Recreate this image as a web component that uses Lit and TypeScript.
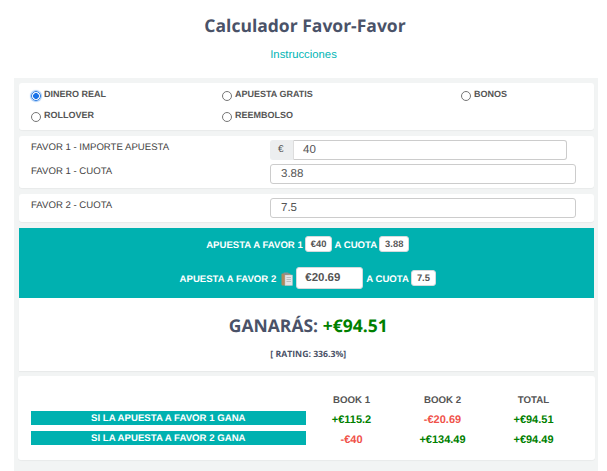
import { LitElement, html, css } from "lit";
import { customElement } from "lit/decorators.js";

const radio = (label: string, checked = false) => html`<label class="radio"><span class="dot ${checked ? "on" : ""}"></span><b>${label}</b></label>`;
const clip = html`<svg class="clip" width="12" height="14" viewBox="0 0 12 14">
  <rect x="0.5" y="1.5" width="9" height="12" rx="1" fill="#b08a5e"/>
  <rect x="4" y="3" width="7.5" height="10.5" fill="#e4e6e8" stroke="#b9bdc0" stroke-width=".5"/>
  <rect x="2.5" y="0.5" width="5" height="2.2" rx=".6" fill="#8a8f93"/>
  <path d="M5.5 5.5h4.5M5.5 7.5h4.5M5.5 9.5h4.5" stroke="#a9adb0" stroke-width=".7"/>
</svg>`;

@customElement("app-root")
export class AppRoot extends LitElement {
  static styles = css`
    :host { display: block; width: 607px; height: 471px; overflow: hidden; background: #fff; font-family: "Liberation Sans", Arial, sans-serif; text-rendering: geometricPrecision; }
    h1 { margin: 0; padding: 14px 0 0 3px; height: 24px; text-align: center; font: 700 17.5px/24px "Open Sans", sans-serif; color: #4a5268; }
    .link { margin-top: 10px; height: 14px; line-height: 14px; text-align: center; font-size: 11.3px; color: #00b5b5; }
    .panel { margin: 16px 9px 0 14px; padding: 5px 4.5px 0 5px; height: 388px; background: #f2f4f4; display: flex; flex-direction: column; }
    .card { background: #fff; border-radius: 3px; box-shadow: 0 1px 1px rgba(0,0,0,.04); }
    .radios { height: 47px; margin-bottom: 6px; padding: 5px 0 0 12px; box-sizing: border-box; display: grid; grid-template-columns: 191px 239px 1fr; grid-auto-rows: 21px; }
    .radio { display: flex; align-items: flex-start; font-size: 9px; color: #555; line-height: 12px; }
    .dot { width: 8px; height: 8px; margin: 3px 3px 0 0; border: 1px solid #767676; border-radius: 50%; background: #fff; flex: none; }
    .dot.on { border-color: #2f7de1; background: radial-gradient(circle, #1a73e8 0 2.6px, #fff 3.2px); box-shadow: 0 0 1px 1px #a6cbf7; }
    .inputs { height: 52px; margin-bottom: 6px; padding: 4px 0 0 12px; box-sizing: border-box; display: flex; flex-direction: column; gap: 4px; }
    .single { height: 28px; margin-bottom: 6px; padding: 4px 0 0 12px; box-sizing: border-box; }
    .row { display: flex; height: 20px; }
    .lab { width: 239px; flex: none; font-size: 9.6px; color: #444; line-height: 15px; }
    .field { width: 306px; height: 20px; box-sizing: border-box; border: 1px solid #ccc; border-radius: 3px; padding: 0 10px; font-size: 11.5px; line-height: 19px; color: #555; background: #fff; }
    .addon { width: 23px; height: 20px; box-sizing: border-box; background: #eceeef; border-radius: 3px 0 0 3px; font-size: 10px; line-height: 20px; padding-left: 8px; color: #555; }
    .field.short { width: 274px; border-radius: 0 3px 3px 0; border-left-color: #ddd; padding-left: 9px; }
    .teal { height: 70px; background: #00b1b0; color: #fff; font-size: 9.6px; font-weight: 700; display: flex; flex-direction: column; align-items: center; }
    .tl { display: flex; align-items: center; justify-content: center; gap: 2px; height: 34px; padding-left: 3px; }
    .pill { background: #fff; color: #555; border: 1px solid #d5dadd; border-radius: 3px; padding: 0 5px; height: 14px; line-height: 14px; font-size: 9.4px; font-weight: 700; margin-bottom: 2px; }
    .big { width: 67px; height: 22px; box-sizing: border-box; background: #fff; color: #555; border: 1px solid #d5dadd; border-radius: 3px; font-size: 11.5px; font-weight: 700; line-height: 20px; padding-left: 8px; margin: 0 1px 2px 0; }
    .clip { margin: 0 1px 0 3px; }
    .result { height: 73px; padding-left: 4px; background: #fff; text-align: center; box-shadow: 0 1px 1px rgba(0,0,0,.04); margin-bottom: 5px; }
    .win { padding-top: 16px; height: 24px; font: 700 17.5px/24px "Open Sans", sans-serif; color: #4a5268; }
    .win span { color: #008000; }
    .rating { margin-top: 10px; font: 700 8.7px/12px "Open Sans", sans-serif; color: #4a5268; }
    .table { margin: 0 -1px; height: 84px; padding: 18px 0 0 13px; box-sizing: border-box; display: grid; grid-template-columns: 275px 91px 91px 91px; grid-template-rows: 14px 20px 20px; align-items: center; text-align: center; font-size: 11px; font-weight: 700; }
    .h { color: #555; font-size: 9.7px; height: 14px; line-height: 14px; align-self: start; }
    .bar { background: #00b1b0; color: #fff; height: 14px; line-height: 15px; font-size: 9.65px; text-align: left; padding-left: 60px; box-sizing: border-box; }
    .g, .r { padding-top: 3px; }
    .g { color: #008000; }
    .r { color: #f0524a; }
  `;
  render() {
    return html`
      <h1>Calculador Favor-Favor</h1>
      <div class="link">Instrucciones</div>
      <div class="panel">
        <div class="card radios">
          ${radio("DINERO REAL", true)}${radio("APUESTA GRATIS")}${radio("BONOS")}
          ${radio("ROLLOVER")}${radio("REEMBOLSO")}
        </div>
        <div class="card inputs">
          <div class="row"><div class="lab">FAVOR 1 - IMPORTE APUESTA</div><div class="addon">€</div><div class="field short">40</div></div>
          <div class="row"><div class="lab">FAVOR 1 - CUOTA</div><div class="field">3.88</div></div>
        </div>
        <div class="card single">
          <div class="row"><div class="lab">FAVOR 2 - CUOTA</div><div class="field">7.5</div></div>
        </div>
        <div class="teal">
          <div class="tl">APUESTA A FAVOR 1 <span class="pill">€40</span> A CUOTA <span class="pill">3.88</span></div>
          <div class="tl">APUESTA A FAVOR 2 ${clip}<span class="big">€20.69</span> A CUOTA <span class="pill">7.5</span></div>
        </div>
        <div class="result">
          <div class="win">GANARÁS: <span>+€94.51</span></div>
          <div class="rating">[ RATING: 336.3%]</div>
        </div>
        <div class="card table">
          <div class="h"></div><div class="h">BOOK 1</div><div class="h">BOOK 2</div><div class="h">TOTAL</div>
          <div class="bar">SI LA APUESTA A FAVOR 1 GANA</div><div class="g">+€115.2</div><div class="r">-€20.69</div><div class="g">+€94.51</div>
          <div class="bar">SI LA APUESTA A FAVOR 2 GANA</div><div class="r">-€40</div><div class="g">+€134.49</div><div class="g">+€94.49</div>
        </div>
      </div>
    `;
  }
}
